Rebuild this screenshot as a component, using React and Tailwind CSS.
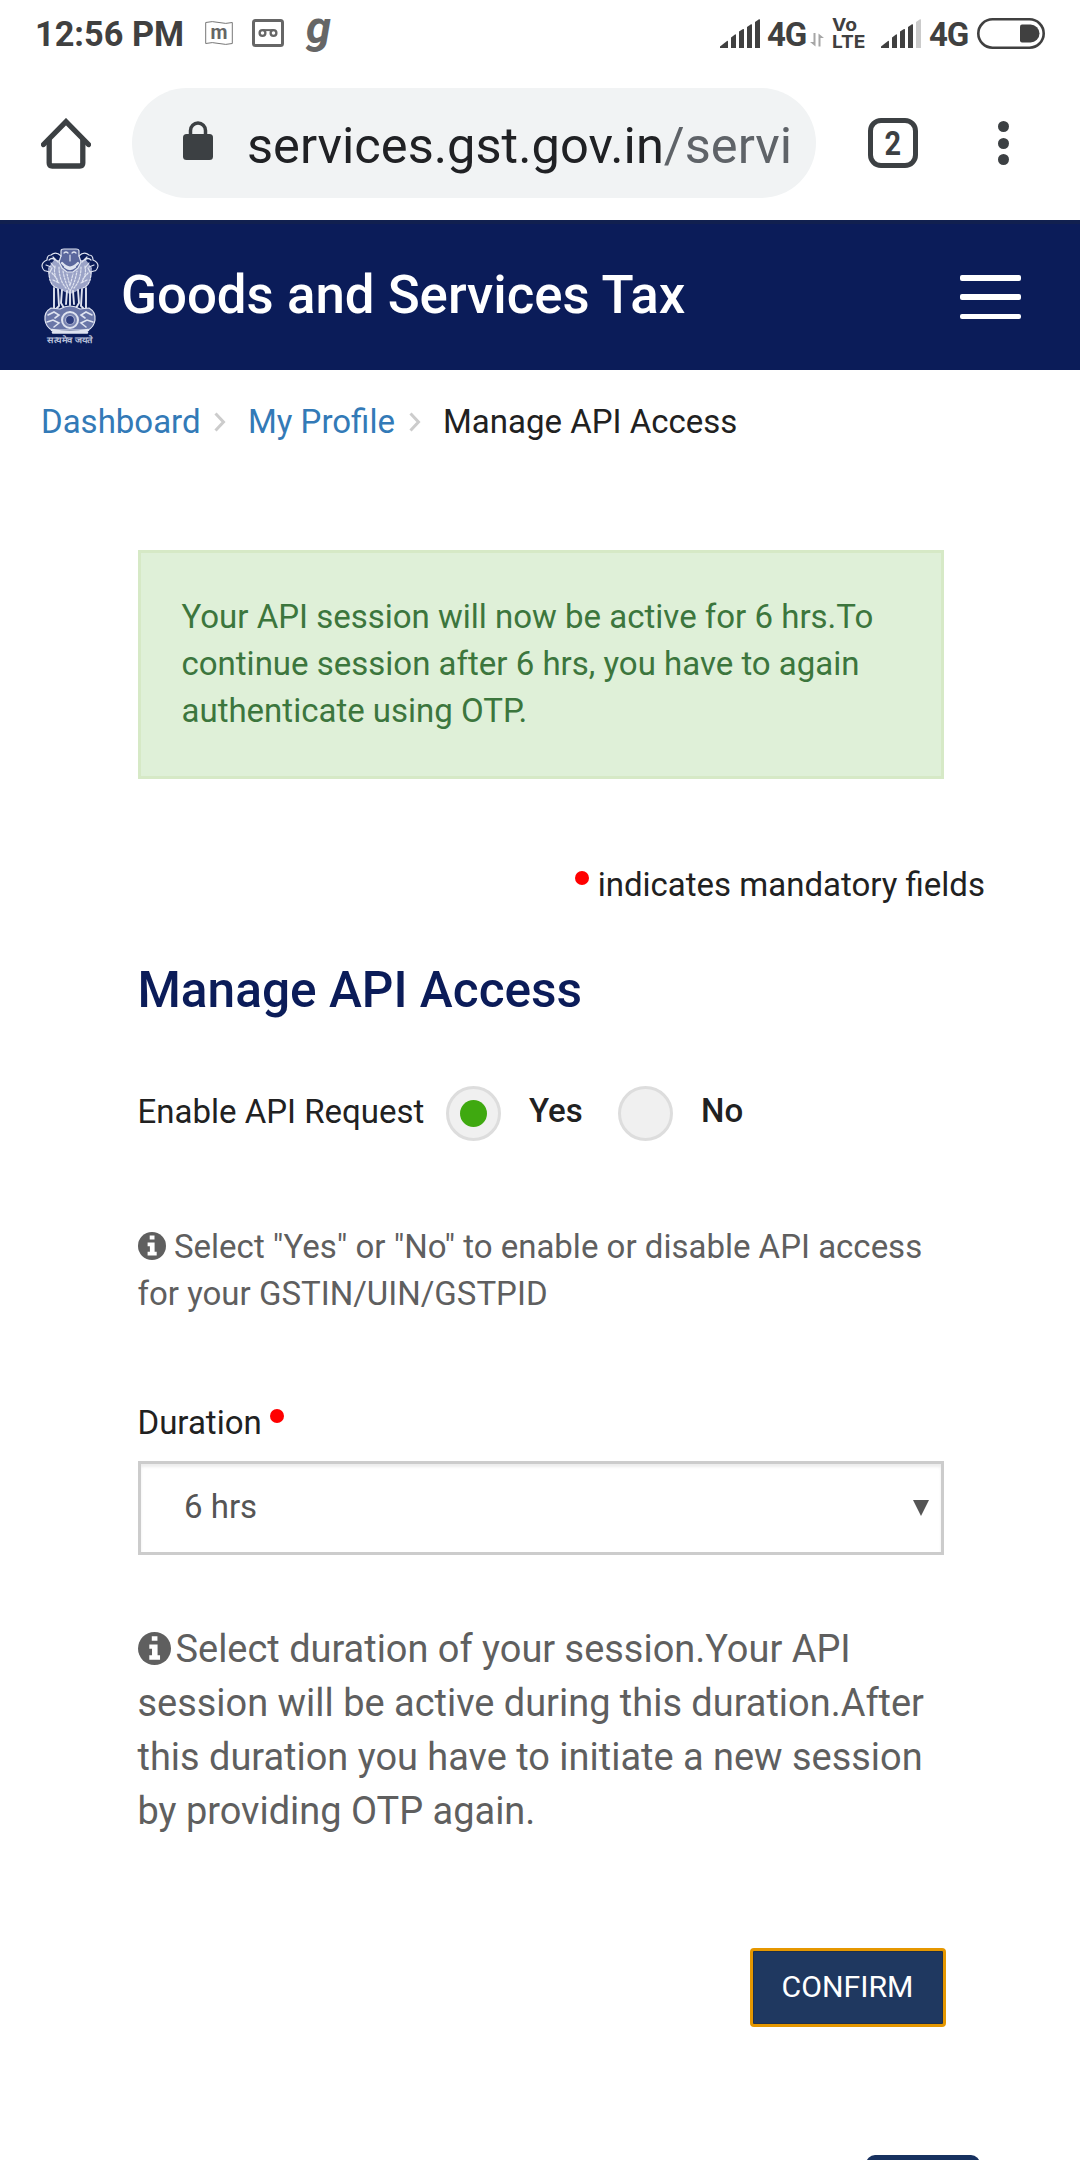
import React from "react";

function Signal({ weak }) {
  return (
    <svg className="h-[29px] w-10 shrink-0" viewBox="0 0 40 29" fill="#404040">
      <path d="M0 29v-1.500l7-5.500q1-.5 1 .5V29z" />
      <path d="M11 29V18.500l4-3q1-.5 1 .5V29z" />
      <path d="M19 29V12.500l4-2.500q1-.4 1 .6V29z" />
      <path d="M27 29V8l4-2.700q1-.4 1 .6V29z" />
      <path d="M35 29V3l4-2.700q1-.4 1 .6V29z" fill={weak ? "#cbcbcb" : "#404040"} />
    </svg>
  );
}

function StatusBar() {
  return (
    <div className="flex h-[66px] items-center pl-[35px] pr-[35px] text-[#404040]">
      <span className="mt-[3px] w-[149px] whitespace-nowrap text-[34.300px] font-bold leading-none">12:56 PM</span>
      <svg className="ml-[21px] h-6 w-7 shrink-0 overflow-visible" viewBox="0 0 28 24" fill="none">
        <path d="M.7 1.500q6.500-1.800 13.300 0t13.300 0v21q-6.500 1.800-13.300 0t-13.300 0z" stroke="#777" />
        <text x="5.500" y="17.500" fontSize="21" fontWeight="700" fill="#666" textLength="17" lengthAdjust="spacingAndGlyphs">m</text>
      </svg>
      <svg className="ml-[19px] h-7 w-8 shrink-0" viewBox="0 0 32 28" fill="none" stroke="#666">
        <rect x="1.500" y="1.500" width="29" height="25" rx="2" strokeWidth="3" />
        <circle cx="10.500" cy="14" r="2.900" strokeWidth="2.300" />
        <circle cx="21.500" cy="14" r="2.900" strokeWidth="2.300" />
        <path d="M11 11.100h10" strokeWidth="2" />
      </svg>
      <svg className="ml-[20px] h-[66px] w-8 shrink-0" viewBox="0 0 32 66">
        <text x="2" y="43" fontSize="45.500" fontWeight="700" fontStyle="italic" fill="#666" textLength="25" lengthAdjust="spacingAndGlyphs">g</text>
      </svg>
      <div className="ml-auto flex items-center">
        <Signal />
        <span className="ml-[7px] mt-[2px] w-[41px] whitespace-nowrap text-[33px] font-bold leading-none tracking-[-1.200px]">4G</span>
        <svg className="mt-[13px] ml-[2px] h-[14px] w-[14px] shrink-0" viewBox="0 0 14 14" fill="#a6a6a6">
          <path d="M3.500 0h2v13.500L0 9h3.500zM8.500 13.500h2V5H14L8.500.5z" />
        </svg>
        <svg className="ml-2 h-[30px] w-[34px] shrink-0 overflow-visible font-[Inter]" viewBox="0 0 34 30" fill="#404040" fontWeight="700">
          <text x="0" y="12.800" fontSize="17.500" textLength="25" lengthAdjust="spacingAndGlyphs">Vo</text>
          <text x="0" y="30" fontSize="17.500" textLength="33.500" lengthAdjust="spacingAndGlyphs">LTE</text>
        </svg>
        <div className="ml-[15px] flex"><Signal weak /></div>
        <span className="ml-2 mt-[2px] w-[40px] whitespace-nowrap text-[33px] font-bold leading-none tracking-[-1.200px]">4G</span>
        <svg className="ml-2 h-[31px] w-[68px] shrink-0" viewBox="0 0 68 31" fill="none">
          <rect x="1.300" y="1.300" width="65.400" height="28.400" rx="14.200" stroke="#404040" strokeWidth="2.600" />
          <path d="M45 6.500h8.500a9 9 0 0 1 0 18H45q-2 0-2-2v-14q0-2 2-2z" fill="#404040" />
        </svg>
      </div>
    </div>
  );
}

function BrowserBar() {
  return (
    <div className="flex h-[154px] items-start pt-[22px] text-[#3c4043]">
      <svg className="mt-[30px] ml-[41px] h-[51px] w-[50px] shrink-0" viewBox="0 0 50 51" fill="none" stroke="#3c4043" strokeWidth="5.300">
        <path d="M8.200 21v24q0 3 3 3h27.600q3 0 3-3V21" />
        <path d="M2.500 26.500 25 3.700l22.500 22.800" strokeLinecap="round" />
      </svg>
      <div className="ml-[41px] flex h-[110px] w-[684px] items-center rounded-full bg-[#f1f3f4] pl-[51px]">
        <svg className="-mt-[5px] h-[39px] w-[30px] shrink-0" viewBox="0 0 30 39" fill="none">
          <path d="M7.500 16V9.500a7.500 7.500 0 0 1 15 0V16" stroke="#3c4043" strokeWidth="3.500" />
          <rect y="13" width="30" height="26" rx="3.500" fill="#3c4043" />
        </svg>
        <div className="ml-[34px] pt-[6px] whitespace-nowrap text-[50.600px] leading-[60px] text-[#202124]">
          services.gst.gov.in<span className="text-[#5f6368]">/servi</span>
        </div>
      </div>
      <div className="mt-[30px] ml-[52px] flex h-[50px] w-[50px] items-center justify-center rounded-[13px] border-[5.500px] border-[#3c4043]">
        <span className="text-[34px] font-bold leading-none"><span className="inline-block scale-x-85">2</span></span>
      </div>
      <div className="mt-[33px] ml-[80px] flex flex-col gap-[5.500px]">
        <i className="h-[11px] w-[11px] rounded-full bg-[#3c4043]" />
        <i className="h-[11px] w-[11px] rounded-full bg-[#3c4043]" />
        <i className="h-[11px] w-[11px] rounded-full bg-[#3c4043]" />
      </div>
    </div>
  );
}

function Emblem() {
  return (
    <svg className="h-[98px] w-[58px] shrink-0 overflow-visible" viewBox="0 0 58 98" fill="none" stroke="#dfe3f0" strokeWidth="1.200" strokeLinecap="round">
      <path d="M7 20q0 14 6 19l6 2 5 3 5 2 5-2 5-3 6-2q6-5 6-19l-6-8H13z" fill="#9ba3c7" stroke="none" />
      <path d="M20 8V3q0-2 3-2h12q3 0 3 2v5l2 6-3 6-5 4h-6l-5-4-3-6z" fill="#5b679d" />
      <path d="M23 5q2-2 4 0M31 5q2-2 4 0M29 7v6" />
      <path d="M21 15q8 9 16 0M24 19q5 4 10 0" strokeWidth="2.200" />
      <path d="M20 8q-5-5-10-1-4 0-4 5-5 2-5 6 1 5 4 5l4 1 2-4M38 8q5-5 10-1 4 0 4 5 5 2 5 6-1 5-4 5l-4 1-2-4" />
      <path d="M8 12q3-3 6 0M5 17l5 2M12 9l5 5M10 15l4 5M50 12q-3-3-6 0M53 17l-5 2M46 9l-5 5M48 15l-4 5" />
      <path d="M8 24q0 13 8 16M50 24q0 13-8 16M14 18q-2 9 4 17M44 18q2 9-4 17M18 19q0 13 7 21M40 19q0 13-7 21M22 23q2 12 7 20 5-8 7-20M26 26l3 12 3-12M11 25l5 6M47 25l-5 6M12 32l6 3M46 32l-6 3" strokeDasharray="2 1.500" />
      <path d="M13 40v21M17 41l1 17-4 4M21 42l-1 13 3 5M26 43l-1 13M29 44v13M32 43l1 13M37 42l1 13-3 5M41 41l-1 17 4 4M45 40v21" strokeWidth="1.900" />
      <path d="M10 60q-7 4-6 12 1 7 7 10h36q6-3 7-10 1-8-6-12l-9 1q-10-6-20 0z" fill="#6a76a8" />
      <circle cx="29" cy="72" r="8" fill="#7883b0" strokeWidth="2" />
      <circle cx="29" cy="72" r="4.500" fill="#2f3e80" stroke="#aab1d0" />
      <path d="M7 67l6-3 5 3-4 3M6 74l6-2 6 3-5 4M51 67l-6-3-5 3 4 3M52 74l-6-2-6 3 5 4" strokeWidth="1.600" />
      <path d="M11 82q18 4 36 0M12 84.500h34" strokeWidth="2.600" />
      <text x="6" y="95" fontSize="8.500" fontWeight="700" fill="#b9c0da" stroke="none" textLength="46" lengthAdjust="spacingAndGlyphs">सत्यमेव जयते</text>
    </svg>
  );
}

function SiteHeader() {
  return (
    <header className="flex h-[150px] items-start border-t-4 border-[#11204f] bg-[#0b1c59] text-white">
      <div className="mt-[24px] ml-[41px] flex"><Emblem /></div>
      <h1 className="mt-[36px] ml-[22px] whitespace-nowrap text-[52.800px] font-medium leading-[70px]">Goods and Services Tax</h1>
      <div className="mt-[51px] mr-[59px] ml-auto flex w-[61px] flex-col">
        <i className="h-[6px] rounded-[2px] bg-white" />
        <i className="mt-[13px] h-[6px] rounded-[2px] bg-white" />
        <i className="mt-[14px] h-[5px] rounded-[2px] bg-white" />
      </div>
    </header>
  );
}

function Chevron() {
  return (
    <svg className="h-[20px] w-[12px] shrink-0" viewBox="0 0 12 20" fill="none" stroke="#ccc" strokeWidth="3">
      <path d="M1.500 1.500 9.500 10l-8 8.500" />
    </svg>
  );
}

function InfoIcon({ className }) {
  return (
    <svg className={className} viewBox="0 0 28 28">
      <circle cx="14" cy="14" r="14" fill="#5f5f5f" />
      <path d="M11.700 3.500h4.800v4h-4.800zM9.600 10.500h7v9.300h2.100v3.700H9.600v-3.700h2.300v-5.600H9.600z" fill="#fff" />
    </svg>
  );
}

export default function App() {
  return (
    <div className="h-[2160px] w-[1080px] overflow-hidden bg-white font-[Roboto,sans-serif] text-[33px] leading-[47px] text-[#212121]">
      <StatusBar />
      <BrowserBar />
      <SiteHeader />

      <nav className="mt-[28px] flex h-[47px] items-center whitespace-nowrap pl-[41px] text-[#337ab7]">
        <a className="w-[173px]">Dashboard</a>
        <Chevron />
        <a className="ml-[22px] w-[161px]">My Profile</a>
        <Chevron />
        <span className="ml-[22px] text-[#212121]">Manage API Access</span>
      </nav>

      <main className="pr-[136px] pl-[137.500px]">
        <div className="mt-[105px] h-[229px] border-[3px] border-[#d6e9c6] bg-[#dff0d8] pt-[40px] pl-[41px] text-[#3c763d]">
          Your API session will now be active for 6 hrs.To<br />
          continue session after 6 hrs, you have to again<br />
          authenticate using OTP.
        </div>

        <p className="-mr-[41px] mt-[82px] flex justify-end whitespace-nowrap">
          <i className="mt-[10px] mr-[9px] h-[14px] w-[14px] rounded-full bg-[red]" />
          indicates mandatory fields
        </p>

        <h2 className="mt-[52px] text-[49.600px] font-medium leading-[60px] text-[#0b1c59]">Manage API Access</h2>

        <div className="mt-[66px] flex h-[55px] items-start whitespace-nowrap">
          <span className="mt-[2px] w-[308.500px]">Enable API Request</span>
          <span className="flex h-[55px] w-[55px] items-center justify-center rounded-full border-[3px] border-[#ddd] bg-[#f0f0f0]">
            <i className="h-[27px] w-[27px] rounded-full bg-[#3fa910]" />
          </span>
          <b className="mt-[1px] ml-[28px] w-[89px] font-medium">Yes</b>
          <span className="h-[55px] w-[55px] rounded-full border-[3px] border-[#ddd] bg-[#f0f0f0]" />
          <b className="mt-[1px] ml-[28px] font-medium">No</b>
        </div>

        <p className="mt-[82px] whitespace-nowrap text-[#5f5f5f]">
          <InfoIcon className="mr-[8.500px] inline-block h-[28px] w-[28px] align-[-2px]" />
          Select "Yes" or "No" to enable or disable API access<br />
          for your GSTIN/UIN/GSTPID
        </p>

        <div className="mt-[82px] flex">
          Duration
          <i className="mt-[10px] ml-[8px] h-[14px] w-[14px] rounded-full bg-[red]" />
        </div>
        <div className="mt-[15px] flex h-[94px] items-center justify-between border-[3px] border-[#ccc] pr-[12px] pl-[43.500px] text-[#555] shadow-[inset_0_3px_3px_rgba(0,0,0,0.075)]">
          <span className="-mt-[4px]">6 hrs</span>
          <svg className="h-4 w-4" viewBox="0 0 16 16"><path d="M0 0h16L8 16z" fill="#555" /></svg>
        </div>

        <p className="mt-[67px] whitespace-nowrap text-[37.950px] leading-[54px] text-[#5f5f5f]">
          <InfoIcon className="mr-[5px] inline-block h-[33px] w-[33px] align-[-3px]" />
          Select duration of your session.Your API<br />
          session will be active during this duration.After<br />
          this duration you have to initiate a new session<br />
          by providing OTP again.
        </p>

        <div className="mt-[110px] flex justify-end">
          <button className="-mr-[1.500px] flex h-[79px] w-[196px] items-center justify-center rounded-[4px] border-[3px] border-[#e59700] bg-[#1f3860] pb-[2px] text-[30.200px] text-white shadow-[inset_0_0_0_1px_#20304a]">CONFIRM</button>
        </div>
        <div className="-mr-[36px] mt-[128px] flex justify-end">
          <div className="h-[60px] w-[114px] rounded-[9px] bg-[#17315f]" />
        </div>
      </main>
    </div>
  );
}
